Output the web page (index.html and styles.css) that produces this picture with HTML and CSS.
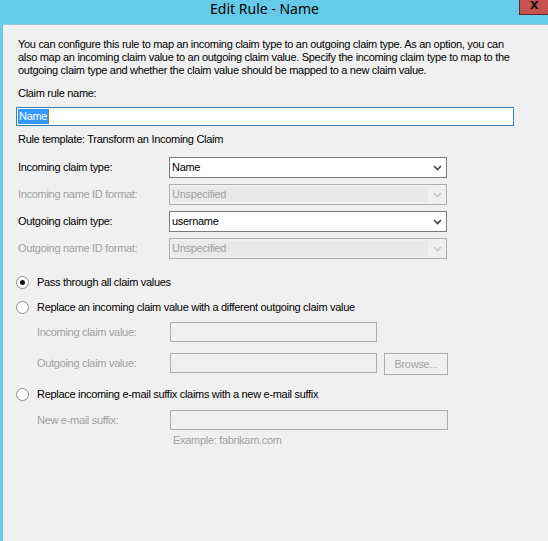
FILE: index.html
```html
<!DOCTYPE html>
<html lang="en">
<head>
  <meta charset="UTF-8" />
  <title>Edit Rule - Name</title>
  <link rel="stylesheet" href="styles.css">
</head>
<body>
  <div class="window">
    <div class="titlebar">
      <div class="title">Edit Rule - Name</div>
      <div class="close-btn">X</div>
    </div>

    <div class="content">
      <p class="intro">
        You can configure this rule to map an incoming claim type to an outgoing claim type. As an option, you can<br>
        also map an incoming claim value to an outgoing claim value. Specify the incoming claim type to map to the<br>
        outgoing claim type and whether the claim value should be mapped to a new claim value.
      </p>

      <div class="label name-label">Claim rule name:</div>
      <div class="textbox focused"><span class="selected">Name</span><span class="caret"></span></div>

      <div class="label template">Rule template: Transform an Incoming Claim</div>

      <div class="form-grid">
        <div class="label">Incoming claim type:</div>
        <div class="combo">
          <span class="combo-text">Name</span>
          <span class="combo-arrow"><svg width="9" height="6" viewBox="0 0 9 6"><path d="M1 1 L4.5 4.5 L8 1" fill="none" stroke="currentColor" stroke-width="1.6"/></svg></span>
        </div>

        <div class="label disabled">Incoming name ID format:</div>
        <div class="combo is-disabled">
          <span class="combo-text">Unspecified</span>
          <span class="combo-arrow"><svg width="9" height="6" viewBox="0 0 9 6"><path d="M1 1 L4.5 4.5 L8 1" fill="none" stroke="currentColor" stroke-width="1.6"/></svg></span>
        </div>

        <div class="label">Outgoing claim type:</div>
        <div class="combo">
          <span class="combo-text">username</span>
          <span class="combo-arrow"><svg width="9" height="6" viewBox="0 0 9 6"><path d="M1 1 L4.5 4.5 L8 1" fill="none" stroke="currentColor" stroke-width="1.6"/></svg></span>
        </div>

        <div class="label disabled">Outgoing name ID format:</div>
        <div class="combo is-disabled">
          <span class="combo-text">Unspecified</span>
          <span class="combo-arrow"><svg width="9" height="6" viewBox="0 0 9 6"><path d="M1 1 L4.5 4.5 L8 1" fill="none" stroke="currentColor" stroke-width="1.6"/></svg></span>
        </div>
      </div>

      <div class="radio-row first">
        <span class="radio checked"></span>
        <span class="label">Pass through all claim values</span>
      </div>

      <div class="radio-row">
        <span class="radio"></span>
        <span class="label">Replace an incoming claim value with a different outgoing claim value</span>
      </div>

      <div class="sub-grid">
        <div class="label disabled">Incoming claim value:</div>
        <div class="field-line">
          <div class="textbox is-disabled short"></div>
        </div>
        <div class="label disabled">Outgoing claim value:</div>
        <div class="field-line">
          <div class="textbox is-disabled short"></div>
          <div class="button is-disabled">Browse...</div>
        </div>
      </div>

      <div class="radio-row third">
        <span class="radio"></span>
        <span class="label">Replace incoming e-mail suffix claims with a new e-mail suffix</span>
      </div>

      <div class="sub-grid email">
        <div class="label disabled">New e-mail suffix:</div>
        <div class="textbox is-disabled wide"></div>
        <div></div>
        <div class="label disabled example">Example: fabrikam.com</div>
      </div>
    </div>
  </div>
</body>
</html>
```

FILE: styles.css
```css
:root {
  --frame: #65cbe9;
  --panel: #f0f0f0;
  --text: #000;
  --muted: #a0a0a0;
  --edge: #7a7a7a;
  --edge-off: #adadad;
}

* {
  box-sizing: border-box;
  margin: 0;
  padding: 0;
}

body {
  background: var(--frame);
  font-family: 'Liberation Sans', Arial, sans-serif;
  font-size: 11px;
  letter-spacing: -0.3px;
  color: var(--text);
  overflow: hidden;
}

.window {
  display: flex;
  flex-direction: column;
  height: 541px;
}

/* title bar */
.titlebar {
  display: flex;
  height: 24px;
  flex-shrink: 0;
}

.title {
  flex: 1;
  text-align: center;
  padding-left: 10px;
  font-family: 'Noto Sans', sans-serif;
  font-size: 14px;
  letter-spacing: 0;
  line-height: 18px;
  color: #000;
}

.close-btn {
  width: 29px;
  height: 15px;
  background: #c75050;
  border: 1px solid #5a2a2a;
  border-top: none;
  border-right: none;
  color: #111;
  font-family: 'DejaVu Sans', sans-serif;
  font-weight: bold;
  font-size: 11px;
  line-height: 12px;
  padding-left: 10px;
}

/* client area */
.content {
  flex: 1;
  margin-left: 3px;
  background: var(--panel);
  border-top: 1px solid #9ac8d8;
  padding: 13px 0 0 15px;
}

.label {
  line-height: 13px;
  white-space: nowrap;
}

.disabled {
  color: var(--muted);
}

.intro {
  line-height: 13px;
  white-space: nowrap;
}

.name-label {
  margin-top: 10px;
}

.textbox {
  height: 19px;
  border: 1px solid var(--edge-off);
  background: #fff;
}

.textbox.focused {
  width: 498px;
  margin: 7px 0 0 -2px;
  border-color: #3c7fb1;
  display: flex;
  align-items: center;
  padding-left: 1px;
}

.selected {
  background: #3399ff;
  color: #fff;
  line-height: 15px;
  padding: 0 1px;
}

.caret {
  width: 1px;
  height: 15px;
  background: #c86a1e;
}

.template {
  margin-top: 7px;
}

/* combo rows */
.form-grid {
  display: grid;
  grid-template-columns: 151px 278px;
  row-gap: 6px;
  align-items: center;
  margin-top: 11px;
}

.combo {
  height: 21px;
  border: 1px solid var(--edge);
  background: #fff;
  display: flex;
  align-items: center;
}

.combo-text {
  flex: 1;
  padding-left: 2px;
  line-height: 15px;
}

.combo-arrow {
  width: 18px;
  display: flex;
  justify-content: center;
  color: #444;
}

.combo.is-disabled {
  border-color: var(--edge-off);
  background: var(--panel);
  color: var(--muted);
  padding: 2px 0 2px 2px;
}

.combo.is-disabled .combo-text {
  background: #e9e9e9;
  padding-left: 0;
}

.combo.is-disabled .combo-arrow {
  color: #c4c4c4;
}

/* radio options */
.radio-row {
  display: flex;
  align-items: center;
  gap: 8px;
  height: 16px;
  margin-top: 9px;
  margin-left: -2px;
}

.radio-row.first {
  margin-top: 15px;
}

.radio-row.third {
  margin-top: 11px;
}

.radio {
  width: 13px;
  height: 13px;
  border-radius: 50%;
  border: 1px solid #8a8a8a;
  background: #fff;
  display: flex;
  align-items: center;
  justify-content: center;
}

.radio.checked::after {
  content: '';
  width: 5px;
  height: 5px;
  border-radius: 50%;
  background: #111;
}

.sub-grid {
  display: grid;
  grid-template-columns: 133px auto;
  row-gap: 9px;
  align-items: center;
  margin: 7px 0 0 19px;
}

.field-line {
  display: flex;
  align-items: center;
  gap: 7px;
}

.textbox.is-disabled {
  background: var(--panel);
  height: 20px;
}

.textbox.short {
  width: 207px;
}

.textbox.wide {
  width: 278px;
}

.button {
  width: 64px;
  height: 22px;
  border: 1px solid var(--edge-off);
  text-align: center;
  line-height: 20px;
  margin-top: 2px;
}

.button.is-disabled {
  color: var(--muted);
}

.sub-grid.email {
  margin-top: 8px;
  row-gap: 4px;
}

.example {
  padding-left: 3px;
}
```
